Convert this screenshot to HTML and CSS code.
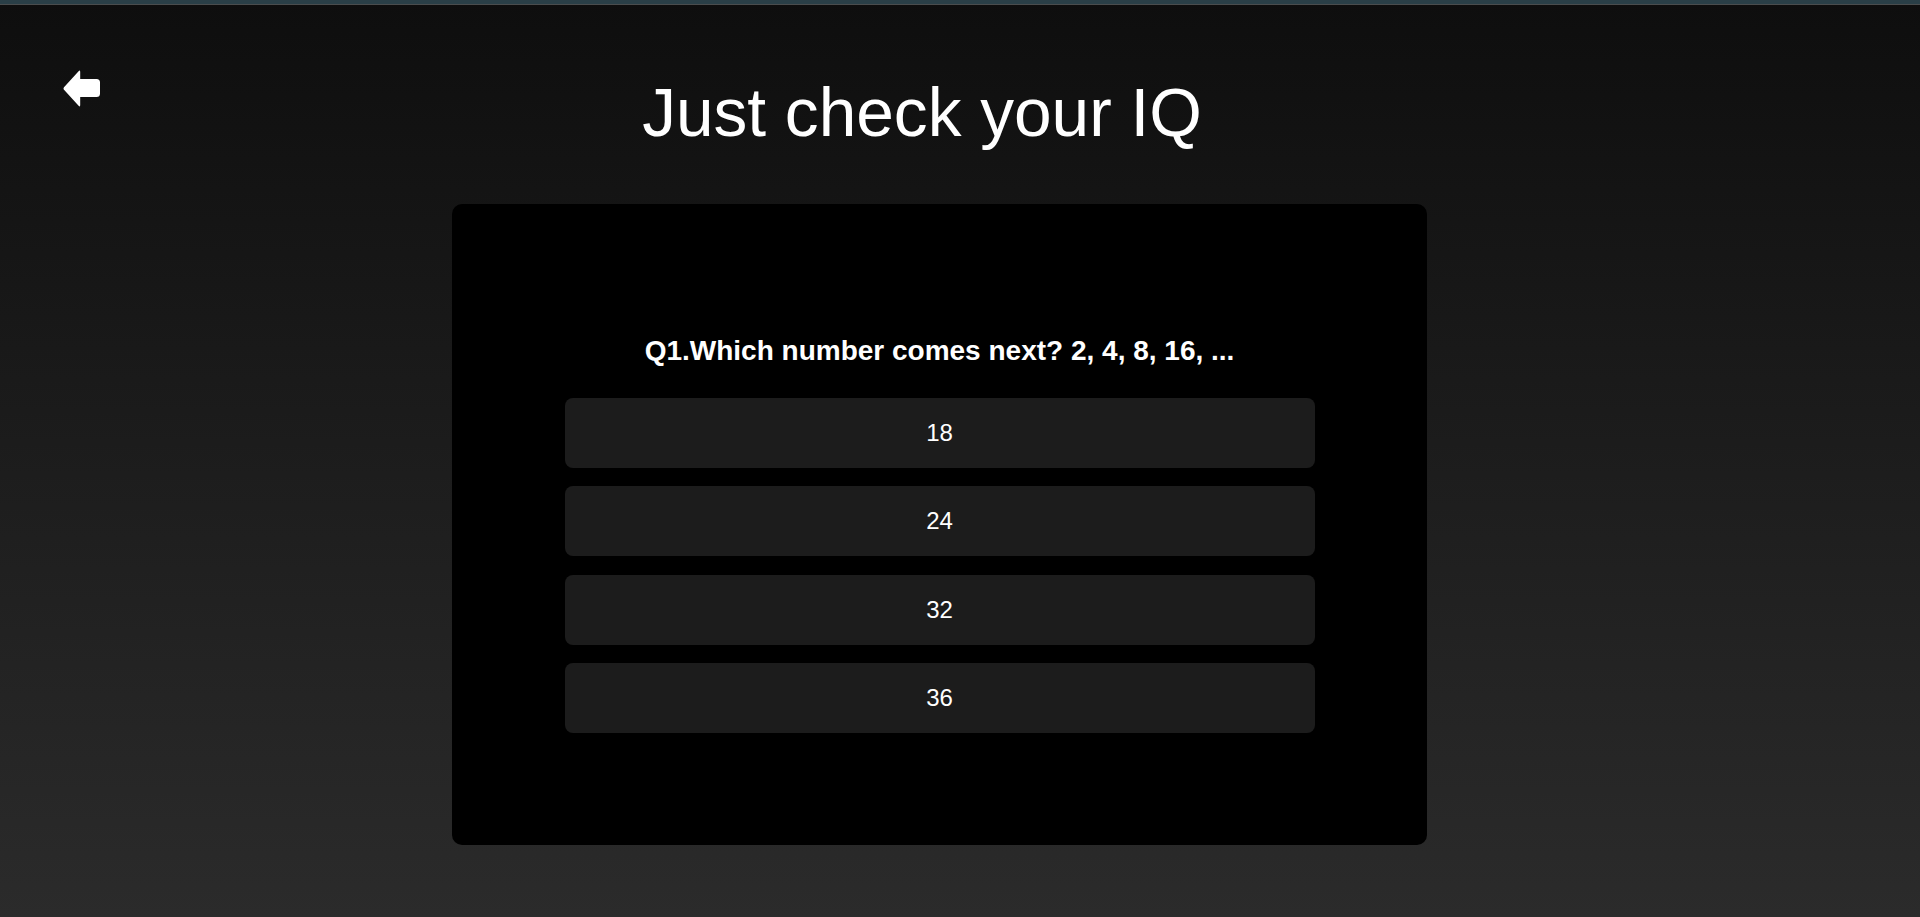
FILE: index.html
```html
<!DOCTYPE html>
<html lang="en">
<head>
<meta charset="utf-8">
<title>Just check your IQ</title>
<link rel="stylesheet" href="styles.css">
</head>
<body>
<div class="topbar"></div>
<header class="header">
  <a class="back" href="#" aria-label="Back">
    <svg width="37" height="37" viewBox="0 0 37 37" aria-hidden="true">
      <path d="M1 17.2 L15.6 1.2 Q17.2 -0.4 17.2 2 L17.2 9 L33.5 9 Q37 9 37 12.5 L37 23.5 Q37 27 33.5 27 L17.2 27 L17.2 35 Q17.2 37.4 15.6 35.8 L1 19.8 Q0 18.5 1 17.2 Z" fill="#ffffff"/>
    </svg>
  </a>
  <h1 class="title">Just check your IQ</h1>
</header>
<main class="wrap">
  <section class="card">
    <p class="question">Q1.Which number comes next? 2, 4, 8, 16, ...</p>
    <div class="options">
      <button class="option">18</button>
      <button class="option">24</button>
      <button class="option">32</button>
      <button class="option">36</button>
    </div>
  </section>
</main>
</body>
</html>
```
FILE: styles.css
```css
html, body {
  margin: 0;
  padding: 0;
}
body {
  min-height: 917px;
  background: linear-gradient(180deg, #0e0e0e 0%, #2b2b2b 100%);
  font-family: "Liberation Sans", Arial, sans-serif;
  color: #ffffff;
}
.topbar {
  height: 4px;
  background: #2a3f47;
  border-bottom: 1px solid #4a4d4e;
}
.header {
  display: flex;
  align-items: flex-start;
  padding-top: 65px;
}
.back {
  display: block;
  margin-left: 63px;
  width: 37px;
  height: 37px;
}
.back svg {
  display: block;
}
.title {
  flex: 1;
  margin: 3px 176px 0 0;
  text-align: center;
  font-size: 67.6px;
  line-height: 80px;
  font-weight: 400;
}
.wrap {
  display: flex;
  justify-content: center;
  padding: 51px 41px 0 0;
}
.card {
  width: 975px;
  box-sizing: border-box;
  background: #000000;
  border-radius: 10px;
  padding: 131px 0 112px;
  display: flex;
  flex-direction: column;
  align-items: center;
}
.question {
  margin: 0 0 31px;
  font-size: 28px;
  line-height: 32px;
  font-weight: 700;
  text-align: center;
}
.options {
  display: flex;
  flex-direction: column;
  gap: 18.4px;
}
.option {
  width: 750px;
  height: 70px;
  border: 0;
  border-radius: 8px;
  background: #1c1c1c;
  color: #ffffff;
  font-family: "Liberation Sans", Arial, sans-serif;
  font-size: 24px;
  cursor: pointer;
}
```
